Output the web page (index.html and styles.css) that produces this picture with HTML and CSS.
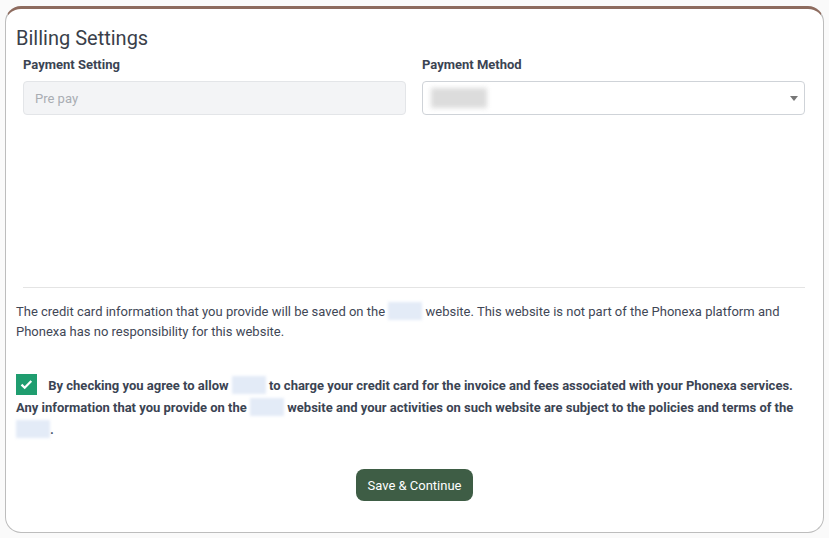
FILE: index.html
```html
<!DOCTYPE html>
<html lang="en">
<head>
  <meta charset="UTF-8">
  <title>Billing Settings</title>
  <link rel="stylesheet" href="styles.css">
</head>
<body>

  <div class="card">
    <h2>Billing Settings</h2>

    <div class="cols">
      <div class="field">
        <label>Payment Setting</label>
        <input type="text" placeholder="Pre pay" disabled>
      </div>
      <div class="field">
        <label>Payment Method</label>
        <div class="select">
          <span class="blur grey"></span>
          <svg class="arrow" width="8" height="5" viewBox="0 0 8 5"><path d="M0 0h8L4 5z" fill="#777"/></svg>
        </div>
      </div>
    </div>

    <div class="frame"></div>
    <hr>

    <p class="note">The credit card information that you provide will be saved on the <span class="blur"></span> website. This website is not part of the Phonexa platform and Phonexa has no responsibility for this website.</p>

    <p class="agree">
      <span class="check">
        <svg width="21" height="21" viewBox="0 0 21 21"><path d="M5.5 10.6l3.2 3.2 6.6-6.8" fill="none" stroke="#fff" stroke-width="2.2"/></svg>
      </span>
      By checking you agree to allow <span class="blur"></span> to charge your credit card for the invoice and fees associated with your Phonexa services. Any information that you provide on the <span class="blur"></span> website and your activities on such website are subject to the policies and terms of the <span class="blur"></span>.
    </p>

    <div class="actions">
      <button type="button">Save &amp; Continue</button>
    </div>
  </div>

</body>
</html>
```

FILE: styles.css
```css
body {
  margin: 0;
  font-family: Roboto, "Liberation Sans", sans-serif;
  background: #fafafa;
  color: #3f4756;
}

.card {
  margin: 6px 5px 5px 5px;
  background: white;
  border: 1px solid #bdbdbd;
  border-top: 3px solid #8d6b5e;
  border-radius: 16px;
  padding: 17px 10px 31px 10px;
}

h2 {
  margin: 0 0 7px 0;
  font-size: 20px;
  line-height: 24px;
  font-weight: 400;
  color: #3a3f4a;
}

.cols {
  display: grid;
  grid-template-columns: 1fr 1fr;
  gap: 16px;
  padding: 0 8px 0 7px;
}

label {
  display: block;
  font-size: 13px;
  line-height: 16px;
  font-weight: bold;
  margin-bottom: 8px;
  color: #3b4453;
}

input, .select {
  box-sizing: border-box;
  width: 100%;
  height: 34px;
  border-radius: 4px;
  font-family: inherit;
  font-size: 13px;
}

input {
  padding: 0 11px;
  background: #f3f4f6;
  border: 1px solid #e3e5e8;
}

input::placeholder {
  color: #a9adb3;
}

.select {
  display: flex;
  align-items: center;
  justify-content: space-between;
  padding: 0 6px 0 8px;
  border: 1px solid #cfd3d8;
  background: white;
}

.frame {
  height: 172px;
}

hr {
  border: none;
  border-top: 1px solid #e4e4e4;
  margin: 0 8px 14px 7px;
}

.note {
  margin: 0 0 32px 0;
  font-size: 13px;
  line-height: 20px;
}

.agree {
  margin: 0;
  font-size: 13px;
  line-height: 22px;
  font-weight: bold;
  color: #3b4453;
}

.check {
  display: inline-block;
  width: 21px;
  height: 21px;
  background: #1f9d6f;
  vertical-align: -5px;
  margin-right: 8px;
}

.check svg {
  display: block;
}

.blur {
  display: inline-block;
  width: 34px;
  height: 18px;
  vertical-align: -4px;
  background: #e3ebf7;
  filter: blur(1.5px);
}

.blur.grey {
  width: 56px;
  height: 20px;
  background: #dcdcdc;
  filter: blur(2.5px);
}

.actions {
  text-align: center;
  margin-top: 28px;
}

button {
  height: 32px;
  padding: 0 11px;
  background: #3e5d45;
  color: white;
  border: none;
  border-radius: 8px;
  font-family: inherit;
  font-size: 13px;
  cursor: pointer;
}
```
